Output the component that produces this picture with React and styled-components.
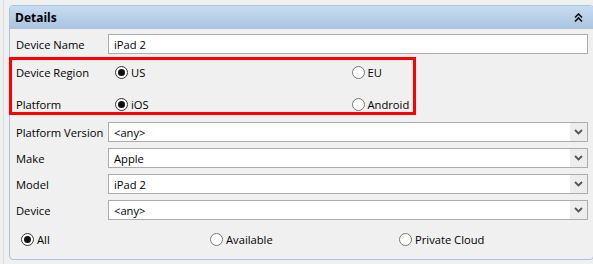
import React from 'react'
import styled, { createGlobalStyle } from 'styled-components'

const Global = createGlobalStyle`
  body {
    margin: 0;
    background: #f0f0f0;
    overflow: hidden;
    font-family: "Open Sans", "Noto Sans", sans-serif;
    font-size: 11.2px;
    color: #000;
  }
`

const Frame = styled.div`
  height: 264px;
  margin-left: 3px;
  padding-top: 5px;
  padding-left: 5px;
  border-left: 1px solid #dcdcdc;
  box-sizing: border-box;
`

const Panel = styled.div`
  position: relative;
  width: 585px;
  height: 255px;
  box-sizing: border-box;
  border: 1px solid #a9c4e2;
  border-radius: 4px;
  background: #f0f0f0;
`

const Header = styled.div`
  height: 23px;
  display: flex;
  align-items: center;
  justify-content: space-between;
  padding: 0 10px 0 5px;
  background: linear-gradient(#c8dcf0, #a9c3e0);
  border-radius: 3px 3px 0 0;
  font-weight: bold;
  font-size: 12px;
`

const Body = styled.div`
  padding: 0 5px 0 6px;
`

const Row = styled.div`
  display: grid;
  grid-template-columns: 92px 1fr;
  align-items: center;
  height: 20px;
  margin-top: ${p => p.$gap || 6}px;
`

const Label = styled.span`
  white-space: nowrap;
`

const Input = styled.div`
  height: 20px;
  box-sizing: border-box;
  border: 1px solid #adadad;
  background: #fff;
  display: flex;
  align-items: center;
  padding-left: 5px;
  position: relative;
`

const Arrow = styled.span`
  position: absolute;
  right: 0;
  top: 0;
  bottom: 0;
  width: 17px;
  background: #ededed;
  display: flex;
  align-items: center;
  justify-content: center;
`

const Choices = styled.div`
  display: grid;
  grid-template-columns: ${p => `repeat(${p.$cols}, 1fr)`};
  padding-left: ${p => p.$inset}px;
  align-items: center;
`

const Choice = styled.label`
  display: flex;
  align-items: center;
  gap: 3px;
  white-space: nowrap;
`

const Dot = styled.span`
  width: 13px;
  height: 13px;
  box-sizing: border-box;
  border-radius: 50%;
  border: 1px solid ${p => (p.$on ? '#333' : '#7a7a7a')};
  background: #fff;
  display: flex;
  align-items: center;
  justify-content: center;
  &::after {
    content: '';
    width: 7px;
    height: 7px;
    border-radius: 50%;
    background: ${p => (p.$on ? '#111' : 'transparent')};
  }
`

const BottomChoices = styled.div`
  display: grid;
  grid-template-columns: repeat(3, 189px);
  align-items: center;
  height: 20px;
  margin-top: 9px;
  padding-left: 5px;
`

const Highlight = styled.div`
  position: absolute;
  left: -1px;
  top: 51px;
  width: 407px;
  height: 58px;
  box-sizing: border-box;
  border: 3px solid #ff0000;
  pointer-events: none;
`

const Collapse = () => (
  <svg width="9" height="9" viewBox="0 0 9 9">
    <polyline points="1,4.5 4.5,1 8,4.5" fill="none" stroke="#111" strokeWidth="1.6" />
    <polyline points="1,8.5 4.5,5 8,8.5" fill="none" stroke="#111" strokeWidth="1.6" />
  </svg>
)

const Chevron = () => (
  <svg width="9" height="6" viewBox="0 0 9 6">
    <polyline points="1,1 4.5,4.5 8,1" fill="none" stroke="#555" strokeWidth="1.8" />
  </svg>
)

const Radio = ({ on, label }) => (
  <Choice>
    <Dot $on={on} />
    {label}
  </Choice>
)

const Select = ({ value }) => (
  <Input>
    {value}
    <Arrow><Chevron /></Arrow>
  </Input>
)

export default function App() {
  return (
    <>
      <Global />
      <Frame>
        <Panel>
          <Header>
            <span>Details</span>
            <Collapse />
          </Header>
          <Body>
            <Row $gap={5}>
              <Label>Device Name</Label>
              <Input>iPad 2</Input>
            </Row>
            <Row $gap={8}>
              <Label>Device Region</Label>
              <Choices $cols={2} $inset={7}>
                <Radio on label="US" />
                <Radio label="EU" />
              </Choices>
            </Row>
            <Row $gap={12}>
              <Label>Platform</Label>
              <Choices $cols={2} $inset={7}>
                <Radio on label="iOS" />
                <Radio label="Android" />
              </Choices>
            </Row>
            <Row $gap={8}>
              <Label>Platform Version</Label>
              <Select value="<any>" />
            </Row>
            <Row>
              <Label>Make</Label>
              <Select value="Apple" />
            </Row>
            <Row>
              <Label>Model</Label>
              <Select value="iPad 2" />
            </Row>
            <Row>
              <Label>Device</Label>
              <Select value="<any>" />
            </Row>
            <BottomChoices>
              <Radio on label="All" />
              <Radio label="Available" />
              <Radio label="Private Cloud" />
            </BottomChoices>
          </Body>
          <Highlight />
        </Panel>
      </Frame>
    </>
  )
}
